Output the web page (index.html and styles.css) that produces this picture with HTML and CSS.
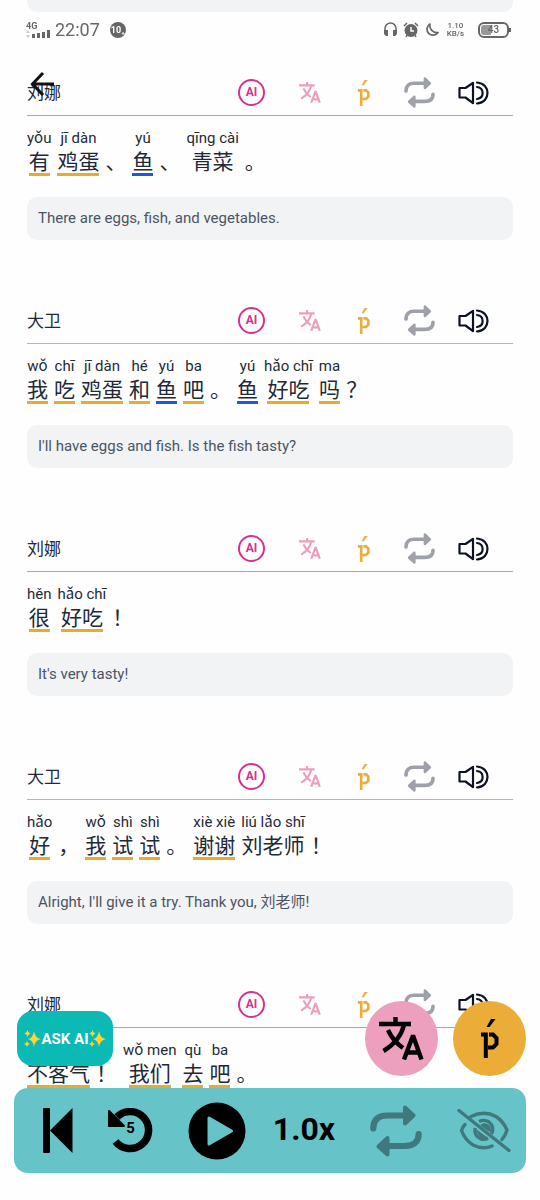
FILE: index.html
```html
<!DOCTYPE html>
<html lang="en">
<head>
<meta charset="utf-8">
<meta name="viewport" content="width=device-width, initial-scale=1">
<title>Dialogue</title>
<link rel="stylesheet" href="styles.css">
</head>
<body>
<svg class="sprite" aria-hidden="true">
  <symbol id="translate" viewBox="0 0 45 43">
    <path fill="none" stroke="currentColor" stroke-width="4.400" d="M0 7H32M16.500 0V7M25 8Q21 24 4.500 34M9 13Q14 24 24 31"/>
    <path fill="none" stroke="currentColor" stroke-width="4.400" stroke-linejoin="bevel" d="M25 42.500L34 18.500L42.500 42.500M28 35.500H40"/>
  </symbol>
  <symbol id="pinyin" viewBox="0 0 18 39">
    <path fill="currentColor" d="M10 0H14.500L8.500 8H5.500z"/>
    <path fill="none" stroke="currentColor" stroke-width="4" d="M0 15.500H6M4.800 13.500V39M8 15.500H12L15.500 19V25L12 28.500H7"/>
  </symbol>
  <symbol id="repeat" viewBox="0 0 52 52">
    <path fill="none" stroke="currentColor" stroke-width="6.200" stroke-linecap="round" d="M3.300 23.500C3.300 15 8 10.500 17 10.500H35M48.700 29C48.700 36.500 44 41 35 41H18"/>
    <path fill="currentColor" stroke="currentColor" stroke-width="4" stroke-linejoin="round" d="M35 2.500L43.500 10.500L35 18.500zM17.500 33L8.500 41.500L17.500 49.500z"/>
  </symbol>
  <symbol id="speaker" viewBox="0 0 31 24">
    <path fill="none" stroke="currentColor" stroke-width="2.200" stroke-linejoin="round" stroke-linecap="round" d="M1.500 7H7.500L15 1.800V22.200L7.500 16.500H1.500zM19 1.500C33 2.500 33 21.500 19 22.500M19 6C26.500 7 26.500 17 19 18"/>
  </symbol>
  <symbol id="sparkles" viewBox="0 0 17 17">
    <path fill="#ffd238" d="M10 1Q11 8 17 9Q11 10 10 17Q9 10 4 9Q9 8 10 1zM3.500 0Q4 3 6.500 3.500Q4 4 3.500 7Q3 4 .5 3.500Q3 3 3.500 0zM3 11Q3.500 13.500 6 14Q3.500 14.500 3 17Q2.500 14.500 0 14Q2.500 13.500 3 11z"/>
  </symbol>
</svg>

<header class="status">
  <div class="status-side">
    <div class="network">
      <b>4G</b>
      <svg width="24" height="8" viewBox="0 0 24 8"><path fill="#ccc" d="M0 3L2 0L4 3zM0 5L2 8L4 5z"/><path fill="#666" d="M6 4h3v4H6zM11 3h3v5h-3zM16 2h3v6h-3zM21 0h3v8h-3z"/></svg>
    </div>
    <span class="clock">22:07</span>
    <span class="count">10₊</span>
  </div>
  <div class="status-side status-right">
    <svg width="13" height="16" viewBox="0 0 13 16"><path fill="none" stroke="#666" stroke-width="1.500" d="M1 11V6.500A5.500 5.500 0 0 1 12 6.500V11"/><path fill="#666" d="M0 8h4v6H2L0 12zM13 8H9v6h2l2-2z"/></svg>
    <svg width="16" height="16" viewBox="0 0 16 16"><circle cx="8" cy="8.500" r="6.500" fill="#666"/><path fill="none" stroke="#666" stroke-width="1.500" d="M1 4L4 1M15 4L12 1M3 15l1-2M13 15l-1-2"/><path fill="none" stroke="#fff" stroke-width="1.500" d="M8 5V9H11"/></svg>
    <svg width="14" height="14" viewBox="0 0 14 14"><path fill="none" stroke="#666" stroke-width="1.700" stroke-linejoin="round" d="M5 1A6 6 0 1 0 13 9.500A7 7 0 0 1 5 1z"/></svg>
    <span class="speed">1.10<br>KB/s</span>
    <span class="battery">43</span>
  </div>
</header>
<button class="back" aria-label="Back"><svg width="25" height="24" viewBox="0 0 25 24"><path fill="none" stroke="#111" stroke-width="3" d="M13 1L2.500 12L13 23M2.500 12H24"/></svg></button>

<main class="dialogue">
  <div class="previous"></div>

  <article class="entry liu">
    <header class="entry-head"><h2>刘娜</h2>
      <button aria-label="AI"><span class="ai">AI</span></button>
      <button class="pink" aria-label="Translate"><svg class="i-translate"><use href="#translate"/></svg></button>
      <button class="gold" aria-label="Pinyin"><svg class="i-pinyin"><use href="#pinyin"/></svg></button>
      <button class="grey" aria-label="Repeat"><svg class="i-repeat"><use href="#repeat"/></svg></button>
      <button class="ink" aria-label="Listen"><svg class="i-speaker"><use href="#speaker"/></svg></button>
    </header>
    <p class="line" lang="zh-CN">
      <span class="word"><i>yǒu</i><b>有</b></span>
      <span class="word"><i>jī dàn</i><b>鸡蛋</b></span>
      <span class="word mark"><b>、</b></span>
      <span class="word blue"><i>yú</i><b>鱼</b></span>
      <span class="word mark"><b>、</b></span>
      <span class="word plain"><i>qīng cài</i><b>青菜</b></span>
      <span class="word mark"><b>。</b></span>
    </p>
    <p class="meaning">There are eggs, fish, and vegetables.</p>
  </article>

  <article class="entry wei">
    <header class="entry-head"><h2>大卫</h2>
      <button aria-label="AI"><span class="ai">AI</span></button>
      <button class="pink" aria-label="Translate"><svg class="i-translate"><use href="#translate"/></svg></button>
      <button class="gold" aria-label="Pinyin"><svg class="i-pinyin"><use href="#pinyin"/></svg></button>
      <button class="grey" aria-label="Repeat"><svg class="i-repeat"><use href="#repeat"/></svg></button>
      <button class="ink" aria-label="Listen"><svg class="i-speaker"><use href="#speaker"/></svg></button>
    </header>
    <p class="line" lang="zh-CN">
      <span class="word"><i>wǒ</i><b>我</b></span>
      <span class="word"><i>chī</i><b>吃</b></span>
      <span class="word"><i>jī dàn</i><b>鸡蛋</b></span>
      <span class="word"><i>hé</i><b>和</b></span>
      <span class="word blue"><i>yú</i><b>鱼</b></span>
      <span class="word"><i>ba</i><b>吧</b></span>
      <span class="word mark"><b>。</b></span>
      <span class="word blue"><i>yú</i><b>鱼</b></span>
      <span class="word"><i>hǎo chī</i><b>好吃</b></span>
      <span class="word"><i>ma</i><b>吗</b></span>
      <span class="word mark"><b>？</b></span>
    </p>
    <p class="meaning">I'll have eggs and fish. Is the fish tasty?</p>
  </article>

  <article class="entry liu">
    <header class="entry-head"><h2>刘娜</h2>
      <button aria-label="AI"><span class="ai">AI</span></button>
      <button class="pink" aria-label="Translate"><svg class="i-translate"><use href="#translate"/></svg></button>
      <button class="gold" aria-label="Pinyin"><svg class="i-pinyin"><use href="#pinyin"/></svg></button>
      <button class="grey" aria-label="Repeat"><svg class="i-repeat"><use href="#repeat"/></svg></button>
      <button class="ink" aria-label="Listen"><svg class="i-speaker"><use href="#speaker"/></svg></button>
    </header>
    <p class="line" lang="zh-CN">
      <span class="word"><i>hěn</i><b>很</b></span>
      <span class="word"><i>hǎo chī</i><b>好吃</b></span>
      <span class="word mark"><b>！</b></span>
    </p>
    <p class="meaning">It's very tasty!</p>
  </article>

  <article class="entry wei">
    <header class="entry-head"><h2>大卫</h2>
      <button aria-label="AI"><span class="ai">AI</span></button>
      <button class="pink" aria-label="Translate"><svg class="i-translate"><use href="#translate"/></svg></button>
      <button class="gold" aria-label="Pinyin"><svg class="i-pinyin"><use href="#pinyin"/></svg></button>
      <button class="grey" aria-label="Repeat"><svg class="i-repeat"><use href="#repeat"/></svg></button>
      <button class="ink" aria-label="Listen"><svg class="i-speaker"><use href="#speaker"/></svg></button>
    </header>
    <p class="line" lang="zh-CN">
      <span class="word"><i>hǎo</i><b>好</b></span>
      <span class="word mark"><b>，</b></span>
      <span class="word"><i>wǒ</i><b>我</b></span>
      <span class="word"><i>shì</i><b>试</b></span>
      <span class="word"><i>shì</i><b>试</b></span>
      <span class="word mark"><b>。</b></span>
      <span class="word"><i>xiè xiè</i><b>谢谢</b></span>
      <span class="word plain"><i>liú lǎo shī</i><b>刘老师</b></span>
      <span class="word mark"><b>！</b></span>
    </p>
    <p class="meaning">Alright, I'll give it a try. Thank you, 刘老师!</p>
  </article>

  <article class="entry liu">
    <header class="entry-head"><h2>刘娜</h2>
      <button aria-label="AI"><span class="ai">AI</span></button>
      <button class="pink" aria-label="Translate"><svg class="i-translate"><use href="#translate"/></svg></button>
      <button class="gold" aria-label="Pinyin"><svg class="i-pinyin"><use href="#pinyin"/></svg></button>
      <button class="grey" aria-label="Repeat"><svg class="i-repeat"><use href="#repeat"/></svg></button>
      <button class="ink" aria-label="Listen"><svg class="i-speaker"><use href="#speaker"/></svg></button>
    </header>
    <p class="line" lang="zh-CN">
      <span class="word"><b>不客气</b></span>
      <span class="word mark"><b>！</b></span>
      <span class="word"><i>wǒ men</i><b>我们</b></span>
      <span class="word"><i>qù</i><b>去</b></span>
      <span class="word"><i>ba</i><b>吧</b></span>
      <span class="word mark"><b>。</b></span>
    </p>
  </article>
</main>

<footer class="controls">
  <div class="floating">
    <button class="ask"><svg width="17" height="17"><use href="#sparkles"/></svg>ASK AI<svg width="17" height="17"><use href="#sparkles"/></svg></button>
    <button class="fab fab-pink" aria-label="Translate all"><svg width="45" height="43"><use href="#translate"/></svg></button>
    <button class="fab fab-gold" aria-label="Pinyin for all"><svg width="18" height="39"><use href="#pinyin"/></svg></button>
  </div>
  <div class="dock">
    <button aria-label="Previous"><svg width="30" height="45" viewBox="0 0 30 45"><rect width="7" height="45" rx="1"/><path d="M7 22.500L29.500 0V45z"/></svg></button>
    <button class="replay" aria-label="Back 5 seconds"><svg width="45" height="45" viewBox="0 0 45 45"><path fill="none" stroke="#000" stroke-width="7.500" d="M7.500 33.500A18.500 18.500 0 1 0 9 9"/><path stroke="#000" stroke-width="2" stroke-linejoin="round" d="M1 3V18H16z"/></svg><span>5</span></button>
    <button class="play" aria-label="Play"><svg width="58" height="58" viewBox="0 0 58 58"><circle cx="29" cy="29" r="28.500"/><path fill="#66c3c8" stroke="#66c3c8" stroke-width="3" stroke-linejoin="round" d="M21 16V42L43.500 29z"/></svg></button>
    <button class="rate">1.0x</button>
    <button class="muted" aria-label="Repeat all"><svg width="52" height="52"><use href="#repeat"/></svg></button>
    <button class="muted" aria-label="Hide text"><svg width="54" height="43" viewBox="0 0 54 43"><path fill="none" stroke="currentColor" stroke-width="3.400" stroke-linecap="round" d="M2 1.500L52 41.500M14 7.500Q27 1 39 7.500Q46 12 50 21Q48.500 26.500 45 30.500M8 15.500Q5.500 18 4.500 21.500Q8 31 16 36Q26 41 35 37"/><path fill="none" stroke="currentColor" stroke-width="3.400" d="M22 12.500Q27 10 32 13Q38 18 34.500 25M18 19Q17 27 24 30Q28 31 31 29"/><path fill="currentColor" d="M27 14Q35 15 34 23L31 22L23 16zM19 20L31 29Q22 32 19 20z"/></svg></button>
  </div>
</footer>
</body>
</html>
```
FILE: styles.css
```css
* { box-sizing: border-box; }

body {
  margin: 0;
  height: 100vh;
  overflow: hidden;
  background: #fefefe;
  color: #1f2937;
  font-family: Roboto, "Noto Sans CJK SC", sans-serif;
}

button {
  padding: 0;
  border: 0;
  background: none;
  color: inherit;
  font: inherit;
  cursor: pointer;
}

svg { display: block; flex: none; }
.sprite { position: absolute; width: 0; height: 0; }

/* Status bar */
.status {
  position: fixed;
  z-index: 2;
  top: 18px;
  left: 26px;
  right: 31px;
  height: 24px;
  display: flex;
  align-items: center;
  justify-content: space-between;
  color: #666;
}
.status-side { display: flex; align-items: center; gap: 5px; }
.status-right { gap: 6px; }
.network { font-size: 9px; line-height: 8px; }
.network b { display: block; }
.clock { font-size: 18px; line-height: 24px; }
.count {
  width: 16px;
  height: 16px;
  margin-left: 5px;
  border-radius: 50%;
  background: #666;
  color: #fff;
  font-size: 9px;
  font-weight: 700;
  line-height: 16px;
  text-align: center;
}
.speed { margin: 0 8px 0 2px; font-size: 8px; font-weight: 500; line-height: 8px; text-align: center; }
.battery {
  position: relative;
  width: 31px;
  height: 16px;
  border: 2px solid #666;
  border-radius: 6px;
  background: linear-gradient(90deg, #999 40%, transparent 40%) content-box;
  padding: 1px;
  font-size: 10px;
  font-weight: 500;
  line-height: 10px;
  text-align: center;
}
.battery::after {
  content: "";
  position: absolute;
  right: -4px;
  top: 4px;
  width: 2px;
  height: 4px;
  background: #666;
}
.back { position: fixed; z-index: 2; top: 72px; left: 30px; }

/* Dialogue */
.dialogue { padding: 0 5%; }
.previous {
  height: 12px;
  margin-bottom: 58px;
  border-radius: 0 0 10px 10px;
  background: #f2f3f5;
}
.entry { margin-bottom: 58px; }
.entry-head {
  display: grid;
  grid-template-columns: 1fr 59px 58px 49px 62px 46px;
  align-items: center;
  height: 46px;
  padding-right: 17px;
  border-bottom: 1px solid #66c3c8;
}
.wei .entry-head { border-color: #ebb04a; }
.entry-head h2 { margin: 0; font-size: 17px; font-weight: 400; line-height: 24px; }
.entry-head button { display: grid; place-items: center; }
.ai {
  width: 27px;
  height: 27px;
  border: 2px solid #d9308f;
  border-radius: 50%;
  color: #d9308f;
  font-size: 12px;
  font-weight: 700;
  line-height: 23px;
}
.pink { color: #eb9fbd; }
.gold { color: #ebad38; }
.grey { color: #9fa1aa; }
.ink { color: #0c1222; }
.i-translate { width: 22px; height: 21px; }
.i-pinyin { width: 12px; height: 26px; }
.i-repeat { width: 31px; height: 31px; }
.i-speaker { width: 31px; height: 24px; }

.line {
  display: flex;
  flex-wrap: wrap;
  align-items: flex-end;
  gap: 6px;
  margin: 0;
  padding: 12px 0 21px;
}
.word { display: flex; flex-direction: column; align-items: center; }
.word i { font-size: 15px; font-style: normal; line-height: 20px; }
.word b {
  padding-bottom: 1px;
  border-bottom: 3px solid #e8ab2c;
  font-family: "Noto Sans CJK SC", sans-serif;
  font-size: 21px;
  font-weight: 400;
  line-height: 24px;
}
.blue b { border-color: #1d58e0; }
.plain b, .mark b { border-color: transparent; }

.meaning {
  margin: 0;
  padding: 11px;
  border-radius: 10px;
  background: #f2f3f5;
  color: #4b5563;
  font-size: 15px;
  line-height: 21px;
}

/* Player */
.controls {
  position: fixed;
  z-index: 3;
  left: 14px;
  right: 14px;
  bottom: 27px;
  display: flex;
  flex-direction: column;
  gap: 12px;
}
.floating { display: flex; align-items: center; gap: 15px; padding-left: 3px; }
.ask {
  display: flex;
  align-items: center;
  justify-content: center;
  width: 96px;
  height: 55px;
  margin-right: auto;
  border-radius: 16px;
  background: #0bbab5;
  color: #fff;
  font-size: 15px;
  font-weight: 700;
}
.fab {
  display: grid;
  place-items: center;
  width: 73px;
  height: 75px;
  border-radius: 50%;
  color: #000;
}
.fab-pink { background: #ed9fbe; }
.fab-gold { background: #ebad38; }
.dock {
  display: flex;
  align-items: center;
  justify-content: space-between;
  height: 85px;
  padding: 0 15px 0 29px;
  border-radius: 14px;
  background: #66c3c8;
  color: #000;
}
.replay { display: grid; place-items: center; }
.replay > * { grid-area: 1 / 1; }
.replay span { font-size: 15px; font-weight: 700; line-height: 16px; padding-bottom: 6px; }
.play { margin-right: -8px; }
.rate { font-size: 32px; font-weight: 700; line-height: 36px; padding-bottom: 3px; }
.muted { color: #40797d; }
```
